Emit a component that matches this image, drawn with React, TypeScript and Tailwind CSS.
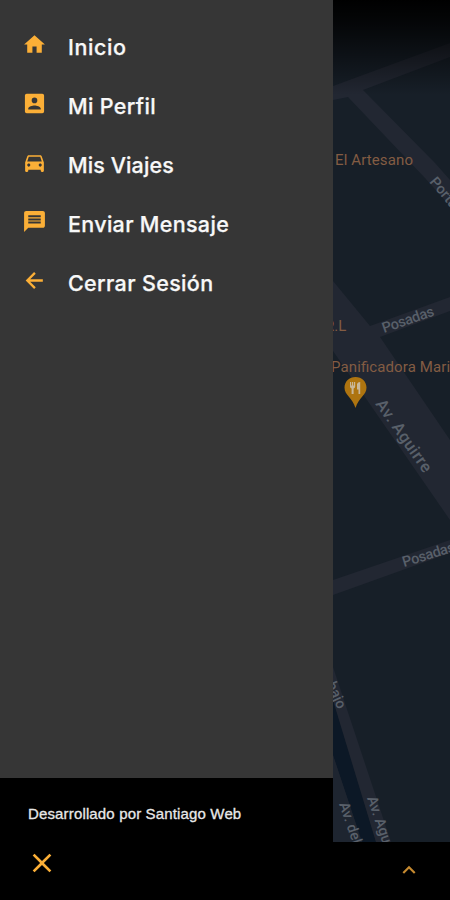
import React from "react";
import { MdClose, MdDirectionsCar, MdHome, MdKeyboardArrowUp, MdMessage } from "react-icons/md";

interface IconProps {
  className?: string;
}

const ProfileIcon = ({ className }: IconProps) => (
  <svg className={className} viewBox="0 0 24 24" fill="currentColor">
    <path
      fillRule="evenodd"
      d="M4.500 2.700h15a1.700 1.700 0 0 1 1.700 1.700v15.200a1.700 1.700 0 0 1-1.700 1.700h-15a1.700 1.700 0 0 1-1.700-1.700V4.400a1.700 1.700 0 0 1 1.700-1.700ZM12 6.300a2.700 2.700 0 1 0 0 5.400 2.700 2.700 0 0 0 0-5.400ZM6 17.700h12v-.8c0-2-4-3.100-6-3.100s-6 1.100-6 3.100Z"
    />
  </svg>
);

const BackIcon = ({ className }: IconProps) => (
  <svg className={className} viewBox="0 0 24 24" fill="none" stroke="currentColor" strokeWidth="2.200">
    <path d="M20 12H5M12.400 4.700 5.100 12l7.300 7.300" />
  </svg>
);

const menuItems = [
  { label: "Inicio", icon: MdHome, spacing: "tracking-[0.6px]" },
  { label: "Mi Perfil", icon: ProfileIcon, spacing: "tracking-[0.35px]" },
  { label: "Mis Viajes", icon: MdDirectionsCar, spacing: "tracking-[0.1px]" },
  { label: "Enviar Mensaje", icon: MdMessage, spacing: "tracking-[0.32px]" },
  { label: "Cerrar Sesión", icon: BackIcon, spacing: "tracking-[0.35px]" },
];

function NightMap() {
  return (
    <svg className="block h-[842px] w-[117px]" viewBox="333 0 117 842">
      <defs>
        <linearGradient id="shade" x1="0" y1="0" x2="0" y2="1">
          <stop offset="0" stopColor="#000" />
          <stop offset="0.25" stopColor="#000" stopOpacity="0.8" />
          <stop offset="1" stopColor="#000" stopOpacity="0" />
        </linearGradient>
      </defs>
      <rect x="333" width="117" height="842" fill="#171f28" />

      {/* roads */}
      <g fill="#222732">
        <path d="M333 86 450 43V57L363 90 435 163 450 180V206L425 178 348 97 333 100Z" />
        <path d="M333 281 370 326 450 297V311L380 337 450 440V520L367 400 333 351Z" />
        <path d="M333 580 450 540V553L333 595Z" />
      </g>
      <path d="M333 700 376 842H362L333 755Z" fill="#0c1826" />
      <path d="M333 667 391 842H376L333 700Z" fill="#222732" />
      <path d="M333 755 362 842H333Z" fill="#1e2530" />

      {/* street names */}
      <g fill="#59606a" fontFamily="Roboto, sans-serif" fontSize="14.500" fontWeight="500">
        <text transform="translate(429 182) rotate(50)">Portugal</text>
        <text transform="translate(384 333) rotate(-19)" textLength="54">Posadas</text>
        <text transform="translate(375 404) rotate(55)" fontSize="16.500" textLength="85">Av. Aguirre</text>
        <text transform="translate(404 567) rotate(-17)" textLength="54">Posadas</text>
        <text transform="translate(318 665) rotate(66)" textLength="49">Trabajo</text>
        <text transform="translate(367 798) rotate(71)">Av. Aguirre</text>
        <text transform="translate(339 804) rotate(71)">Av. del</text>
      </g>

      {/* places */}
      <g fill="#835c43" fontFamily="Roboto, sans-serif" fontSize="15">
        <text x="335" y="165" textLength="78">El Artesano</text>
        <text x="325" y="331">R.L</text>
        <text x="331" y="372" textLength="135">Panificadora Marilin</text>
      </g>
      <path d="M355.500 377c-6.200 0-11 4.600-11 10.600 0 8 7.500 9.500 11 20.400 3.500-10.900 11-12.400 11-20.400 0-6-4.800-10.600-11-10.600Z" fill="#ae7410" />
      <g fill="#c9b79a">
        <path d="M350 382h1.200v3.500h.8V382h1.200v3.500h.8V382h1.200v4.500q0 1.600-1.600 2v5.500h-2v-5.500q-1.600-.4-1.600-2Z" />
        <path d="M357 384q.5-2 3.200-2v12h-1.700v-4.500H357Z" />
      </g>
      <rect x="333" width="117" height="95" fill="url(#shade)" />
    </svg>
  );
}

function Drawer() {
  return (
    <aside className="flex w-[333px] shrink-0 flex-col bg-[#363636]">
      <nav className="flex h-[778px] flex-col pt-[18px]">
        {menuItems.map(({ label, icon: Icon, spacing }) => (
          <a key={label} className="flex h-[59px] items-center pl-[22px]">
            <Icon className="-mt-1.5 size-[25px] shrink-0 text-[#fbaf37]" />
            <span
              className={`ml-[21px] font-['Inter',sans-serif] text-[21.5px] leading-none font-medium
                text-[#f8f8f8] [-webkit-text-stroke:0.25px_#f8f8f8] ${spacing}`}
            >
              {label}
            </span>
          </a>
        ))}
      </nav>
      <footer className="flex grow flex-col bg-black">
        <p className="pt-[26px] pl-[28px] font-['Liberation_Sans',sans-serif] text-[15px] leading-5 tracking-[0.15px] text-[#e8e8e8] [-webkit-text-stroke:0.3px_#e8e8e8]">
          Desarrollado por Santiago Web
        </p>
        <button className="mt-[23px] ml-[26px] w-8">
          <MdClose className="size-8 text-[#fbaf37]" />
        </button>
      </footer>
    </aside>
  );
}

export default function App() {
  return (
    <div className="flex h-[900px] w-[450px] overflow-hidden bg-black">
      <Drawer />
      <main className="flex w-[117px] flex-col">
        <NightMap />
        <button className="mt-[15px] ml-[63px] w-[26px]">
          <MdKeyboardArrowUp className="size-[26px] text-[#c68a30]" />
        </button>
      </main>
    </div>
  );
}
